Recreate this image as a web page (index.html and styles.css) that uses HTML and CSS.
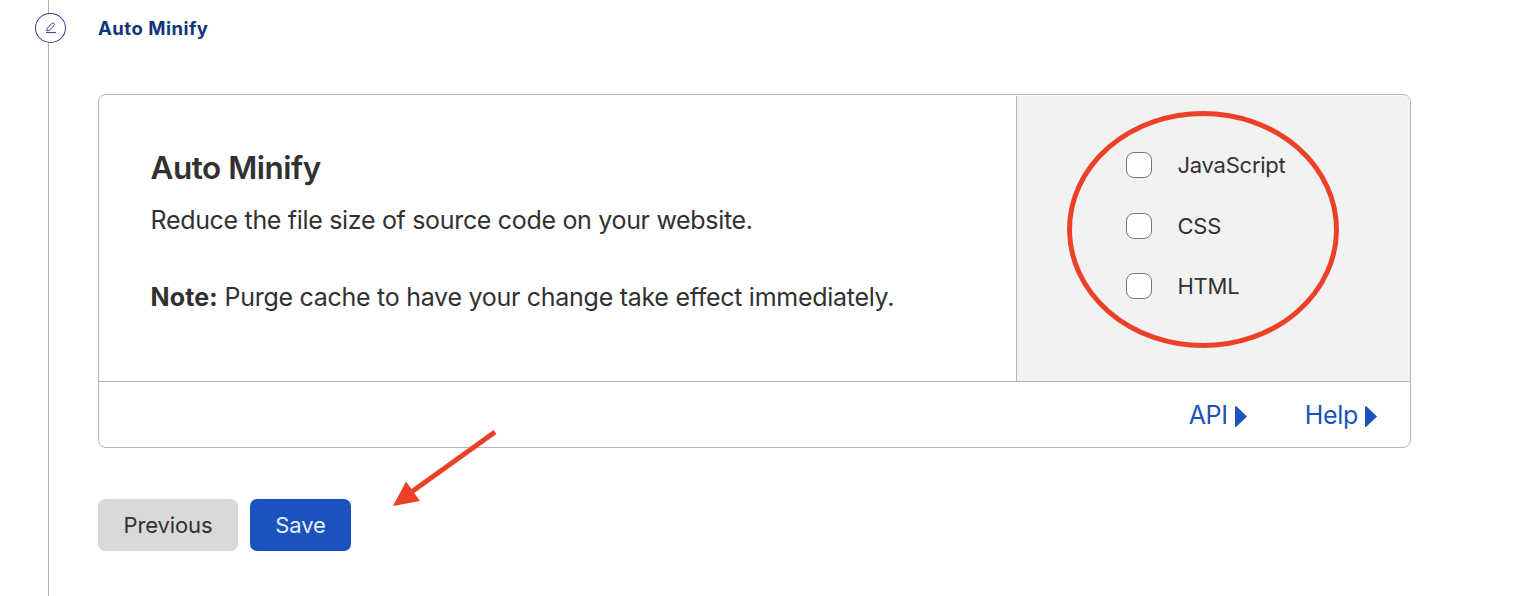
FILE: index.html
```html
<!DOCTYPE html>
<html lang="en">
<head>
    <meta charset="UTF-8">
    <meta name="viewport" content="width=device-width, initial-scale=1.0">
    <title>Auto Minify</title>
    <link rel="stylesheet" href="styles.css">
</head>
<body>
    <div class="step">
        <div class="rail">
            <span class="step-icon">
                <svg width="12" height="12" viewBox="0 0 12 12">
                    <path d="M1.8 9 L2.2 6.4 L6.6 1.6 Q7.7 .5 8.9 1.5 Q9.9 2.5 9 3.6 L4.4 8.2 L1.8 9 M1 10.6 H11"/>
                </svg>
            </span>
        </div>
        <main class="content">
            <h2 class="step-title">Auto Minify</h2>
            <section class="card">
                <div class="card-body">
                    <div class="card-text">
                        <h3>Auto Minify</h3>
                        <p class="desc">Reduce the file size of source code on your website.</p>
                        <p class="note"><strong>Note:</strong> Purge cache to have your change take effect immediately.</p>
                    </div>
                    <div class="card-control">
                        <label><input type="checkbox"><span>JavaScript</span></label>
                        <label><input type="checkbox"><span>CSS</span></label>
                        <label><input type="checkbox"><span>HTML</span></label>
                    </div>
                </div>
                <div class="card-footer">
                    <a class="link">API<svg width="12" height="22" viewBox="0 0 12 22"><path d="M1 0 L12 10.5 L1 21 Q0 21 0 20 V1 Q0 0 1 0"/></svg></a>
                    <a class="link">Help<svg width="12" height="22" viewBox="0 0 12 22"><path d="M1 0 L12 10.5 L1 21 Q0 21 0 20 V1 Q0 0 1 0"/></svg></a>
                </div>
            </section>
            <div class="actions">
                <button class="previous">Previous</button>
                <button class="save">Save</button>
            </div>
        </main>
    </div>

    <!-- red callouts -->
    <svg class="callouts" width="1522" height="596" viewBox="0 0 1522 596">
        <ellipse cx="1203" cy="229.5" rx="133.5" ry="116"/>
        <path class="shaft" d="M495 432 L410 493"/>
        <path class="head" d="M393 506 L406 481.5 L420 501 Z"/>
    </svg>
</body>
</html>
```

FILE: styles.css
```css
* {
    box-sizing: border-box;
}
body {
    margin: 0;
    background-color: #fff;
    color: #313131;
    font-family: Inter, "Liberation Sans", sans-serif;
    overflow: hidden;
}
.step {
    display: flex;
    height: 596px;
}
.rail {
    width: 98px;
    padding: 13px 0 0 35px;
    background: linear-gradient(#b3b3b3, #b3b3b3) 48px 0 / 1px 100% no-repeat;
}
.step-icon {
    display: flex;
    align-items: center;
    justify-content: center;
    width: 31px;
    height: 30px;
    border: 1px solid #2c3c86;
    border-radius: 50%;
    background-color: #fff;
}
.step-icon svg {
    fill: none;
    stroke: #2c3c86;
    stroke-width: 1;
}
.content {
    width: 1313px;
}
.step-title {
    margin: 14px 0 52px;
    color: #10357c;
    font-size: 18.5px;
    font-weight: 700;
    letter-spacing: 0.5px;
    line-height: 28px;
}
.card {
    height: 354px;
    border: 1px solid #b6b6b6;
    border-radius: 8px;
}
.card-body {
    display: flex;
    height: 287px;
    border-bottom: 1px solid #b6b6b6;
}
.card-text {
    flex: 1;
    padding: 52px 0 0 51.5px;
    white-space: nowrap;
}
h3 {
    margin: 0;
    font-size: 31.5px;
    font-weight: 600;
    letter-spacing: -0.5px;
    line-height: 42px;
}
p {
    margin: 0;
    font-size: 25px;
    letter-spacing: -0.32px;
    line-height: 38px;
}
strong {
    letter-spacing: 0.15px;
}
.desc {
    margin-top: 12px;
}
.note {
    margin-top: 39px;
    letter-spacing: -0.28px;
}
.card-control {
    display: flex;
    flex-direction: column;
    gap: 34.6px;
    width: 394px;
    margin-top: 1px;
    padding: 55.6px 0 0 109px;
    border-left: 1px solid #b6b6b6;
    border-radius: 0 7px 0 0;
    background-color: #f2f2f2;
}
label {
    display: flex;
    align-items: center;
    gap: 25.5px;
    height: 26px;
    font-size: 22px;
    letter-spacing: -0.25px;
}
label:nth-child(2) {
    padding-top: 1px;
}
input {
    appearance: none;
    width: 26px;
    height: 26px;
    margin: 0;
    border: 1px solid #777;
    border-radius: 8px;
    background-color: #fff;
}
.card-footer {
    display: flex;
    align-items: center;
    justify-content: flex-end;
    gap: 58px;
    height: 65px;
    padding-right: 33px;
}
.link {
    display: flex;
    align-items: center;
    gap: 7px;
    color: #1b52bc;
    font-size: 25px;
    letter-spacing: -0.3px;
}
.link svg {
    position: relative;
    top: 2px;
    fill: #1b52bc;
}
.actions {
    display: flex;
    gap: 12px;
    margin-top: 51px;
}
button {
    height: 52px;
    padding: 0;
    border: none;
    border-radius: 7px;
    font-family: inherit;
    font-size: 22px;
    letter-spacing: -0.1px;
}
.previous {
    width: 140px;
    background-color: #d9d9d9;
    color: #313131;
}
.save {
    width: 101px;
    background-color: #1a53bd;
    color: #e6efff;
}
.callouts {
    position: absolute;
    top: 0;
    left: 0;
    fill: none;
    stroke: #ec4127;
    stroke-width: 5;
    pointer-events: none;
}
.head {
    fill: #ec4127;
    stroke: none;
}
```
